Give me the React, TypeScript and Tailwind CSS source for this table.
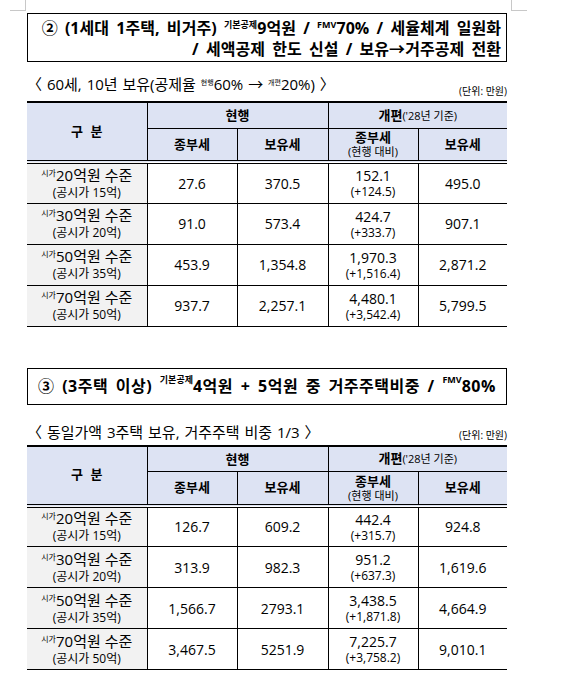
import React from "react";

type Row = [string, string, string, string, string, string, string];

const table1: Row[] = [
  ["20", "15", "27.6", "370.5", "152.1", "+124.5", "495.0"],
  ["30", "20", "91.0", "573.4", "424.7", "+333.7", "907.1"],
  ["50", "35", "453.9", "1,354.8", "1,970.3", "+1,516.4", "2,871.2"],
  ["70", "50", "937.7", "2,257.1", "4,480.1", "+3,542.4", "5,799.5"],
];

const table2: Row[] = [
  ["20", "15", "126.7", "609.2", "442.4", "+315.7", "924.8"],
  ["30", "20", "313.9", "982.3", "951.2", "+637.3", "1,619.6"],
  ["50", "35", "1,566.7", "2793.1", "3,438.5", "+1,871.8", "4,664.9"],
  ["70", "50", "3,467.5", "5251.9", "7,225.7", "+3,758.2", "9,010.1"],
];

function TaxTable({ rows }: { rows: Row[] }) {
  return (
    <table className="w-[480px] table-fixed border-collapse border-t-2 border-b border-black">
      <colgroup>
        <col className="w-[120px]" />
        <col className="w-[90px]" />
        <col className="w-[91px]" />
        <col className="w-[90px]" />
        <col className="w-[89px]" />
      </colgroup>
      <thead>
        <tr className="h-[26px] bg-[#dde3f3]">
          <th
            rowSpan={2}
            className="border-r border-b-[4px] border-double border-black text-[13px] font-bold [word-spacing:4px]"
          >
            구 분
          </th>
          <th colSpan={2} className="border-x border-b border-black text-[13px] font-bold leading-[16px]">
            현행
          </th>
          <th colSpan={2} className="border-l border-b border-black text-[13px] font-bold leading-[16px]">
            개편<span className="text-[11px] font-normal">(&apos;28년 기준)</span>
          </th>
        </tr>
        <tr className="h-[34px] bg-[#dde3f3]">
          <th className="border-r border-b-[4px] border-double border-black text-[13px] font-bold">
            종부세
          </th>
          <th className="border-r border-b-[4px] border-double border-black text-[13px] font-bold">
            보유세
          </th>
          <th className="border-r border-b-[4px] border-double border-black font-bold">
            <div className="text-[13px] leading-[15px]">종부세</div>
            <div className="text-[11px] font-normal leading-[13px]">(현행 대비)</div>
          </th>
          <th className="border-b-[4px] border-double border-black text-[13px] font-bold">
            보유세
          </th>
        </tr>
      </thead>
      <tbody>
        {rows.map((r) => (
          <tr key={r[0]} className="h-[41px] border-t border-black">
            <td className="border-r border-black bg-[#f2f2f2] text-center">
              <div className="text-[15px] leading-[16px]">
                <span className="relative -top-[5px] text-[8px]">시가</span>
                {r[0]}억원 수준
              </div>
              <div className="text-[12px] leading-[14px]">(공시가 {r[1]}억)</div>
            </td>
            <td className="border-r border-black text-center text-[14px]">{r[2]}</td>
            <td className="border-r border-black text-center text-[14px]">{r[3]}</td>
            <td className="border-r border-black text-center">
              <div className="text-[14px] leading-[17px]">{r[4]}</div>
              <div className="text-[12px] leading-[15px]">({r[5]})</div>
            </td>
            <td className="text-center text-[14px]">{r[6]}</td>
          </tr>
        ))}
      </tbody>
    </table>
  );
}

export default function App() {
  return (
    <div
      className="relative h-[688px] w-[562px] overflow-hidden bg-white text-black"
      style={{ fontFamily: '"Open Sans", "Noto Sans CJK KR", sans-serif' }}
    >
      {/* page corner marks */}
      <div className="absolute left-[25px] top-0 h-[11px] w-px bg-[#c8c8c8]" />
      <div className="absolute left-[10px] top-[10px] h-px w-[16px] bg-[#c8c8c8]" />
      <div className="absolute left-[511px] top-0 h-[11px] w-px bg-[#c8c8c8]" />
      <div className="absolute left-[511px] top-[10px] h-px w-[16px] bg-[#c8c8c8]" />

      <div className="ml-[27px] w-[480px] pt-[13px]">
        {/* section 2 title */}
        <div className="h-[49px] border border-black pr-[5px] pt-[5px] text-right text-[16px] font-bold leading-[18px] tracking-[0.05px] whitespace-nowrap [word-spacing:3px]">
          <div>
            ② (1세대 1주택, 비거주){" "}
            <span className="relative -top-[6px] text-[9px] [word-spacing:0px]">기본공제</span>9억원 /{" "}
            <span className="relative -top-[6px] text-[9px]">FMV</span>70% / 세율체계 일원화
          </div>
          <div>/ 세액공제 한도 신설 / 보유→거주공제 전환</div>
        </div>

        <div className="mt-[16px] flex h-[20px] items-end justify-between">
          <div className="text-[15px] leading-[20px] [word-spacing:1px]">
            〈 60세, 10년 보유(공제율{" "}
            <span className="relative -top-[5px] text-[7px]">현행</span>60% →{" "}
            <span className="relative -top-[5px] text-[7px]">개편</span>20%) 〉
          </div>
          <div className="text-[10px] leading-[14px]">(단위: 만원)</div>
        </div>

        <div className="mt-[3px]">
          <TaxTable rows={table1} />
        </div>

        {/* section 3 title */}
        <div className="mt-[41px] flex h-[37px] items-center border border-black pl-[10px] text-[16px] font-bold tracking-[0.5px] whitespace-nowrap [word-spacing:3px]">
          ③ (3주택 이상)&nbsp;
          <span className="relative -top-[6px] text-[9px] tracking-normal [word-spacing:0px]">기본공제</span>4억원 + 5억원 중 거주주택비중 /&nbsp;
          <span className="relative -top-[6px] text-[9px] tracking-normal">FMV</span>80%
        </div>

        <div className="mt-[17px] flex h-[20px] items-end justify-between">
          <div className="text-[15px] leading-[20px] [word-spacing:1px]">
            〈 동일가액 3주택 보유, 거주주택 비중 1/3 〉
          </div>
          <div className="text-[10px] leading-[14px]">(단위: 만원)</div>
        </div>

        <div className="mt-[3px]">
          <TaxTable rows={table2} />
        </div>
      </div>
    </div>
  );
}
